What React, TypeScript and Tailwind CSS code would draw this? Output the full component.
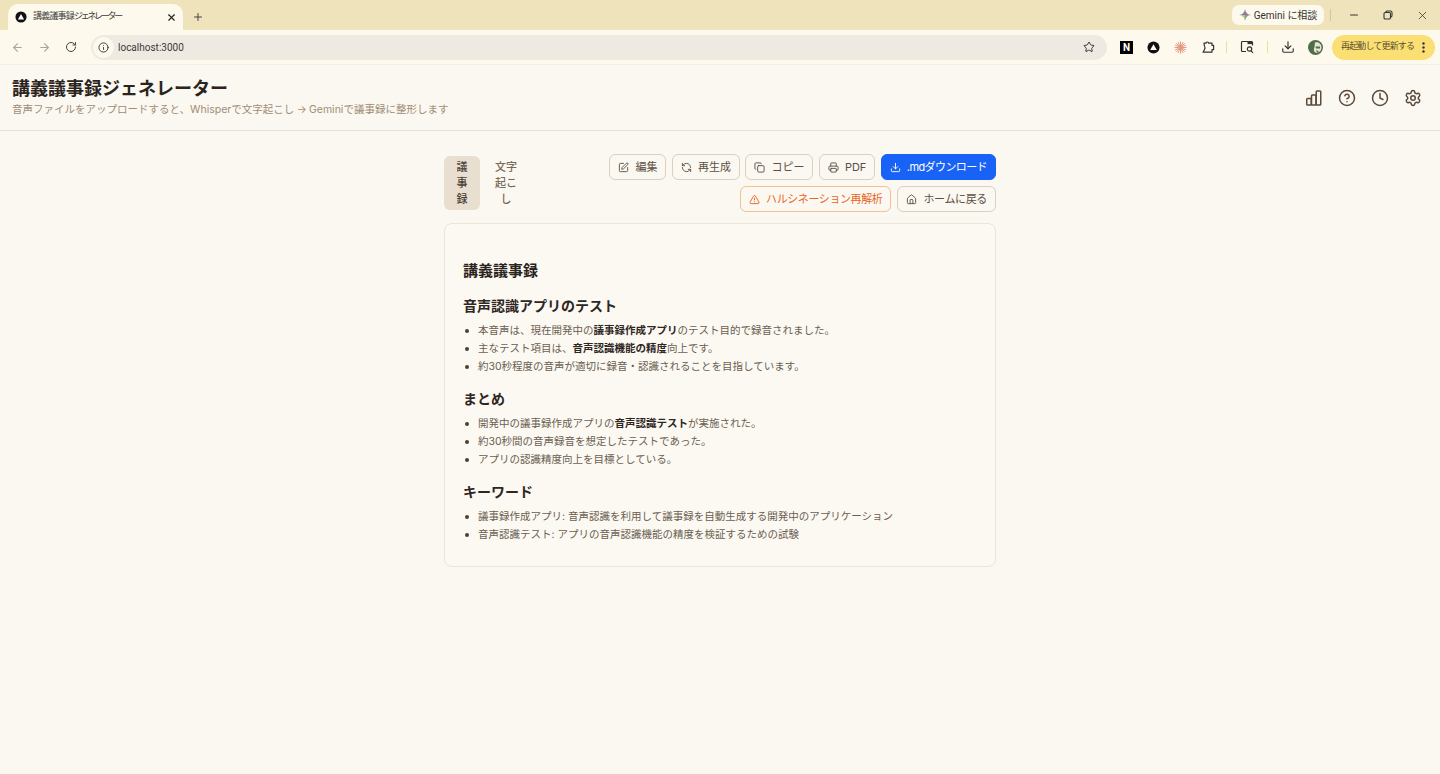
import React from "react";
import { ArrowLeft, ArrowRight, RotateCw, Info, Star, Download, Minus, X, Plus, CircleHelp, Clock, Settings, SquarePen, RefreshCcw, Copy, Printer, TriangleAlert, House } from "lucide-react";

const FONT = { fontFamily: '"Inter","Noto Sans CJK JP",sans-serif' };
const UI = { fontFamily: 'Roboto,"Noto Sans CJK JP",sans-serif' };

function Tri({ size = 14 }: { size?: number }) {
  return (
    <svg width={size} height={size} viewBox="0 0 14 14">
      <circle cx="7" cy="7" r="6.5" fill="#111" />
      <path d="M7 3.4 L10.6 9.8 H3.4 Z" fill="#fff" />
    </svg>
  );
}

function Btn({ icon, children, cls = "border-[#d9d0c1] text-[#5c5045]", text = "" }: { icon: React.ReactNode; children: React.ReactNode; cls?: string; text?: string }) {
  return (
    <button className={`h-[26px] px-[8px] flex items-center gap-[6px] rounded-md border text-[11px] leading-none whitespace-nowrap ${cls}`}>
      {icon}
      <span className={text}>{children}</span>
    </button>
  );
}

function H2({ children, mt }: { children: React.ReactNode; mt: string }) {
  return <h2 className={`text-[14px] leading-[20px] font-semibold text-[#2e261f] ${mt}`}>{children}</h2>;
}

function Li({ children }: { children: React.ReactNode }) {
  return (
    <li className="flex h-[18px] items-center text-[10.5px] text-[#6b5e51]">
      <span className="w-[4px] h-[4px] rounded-full bg-[#4a4036] ml-[2px] mr-[9px]" />
      <span>{children}</span>
    </li>
  );
}

const B = ({ children }: { children: React.ReactNode }) => <strong className="font-bold text-[#2e261f]">{children}</strong>;

export default function App() {
  return (
    <div style={FONT} className="min-h-[774px] bg-[#fbf8f1] flex flex-col overflow-hidden">
      {/* tab strip */}
      <div style={UI} className="h-[30px] bg-[#efe3bb] flex items-end shrink-0">
        <div className="ml-[8px] w-[175px] h-[26px] bg-[#fdf9ec] rounded-t-[10px] flex items-center pl-[7px] pr-[6px] gap-[6px]">
          <Tri size={12} />
          <span className="text-[9px] text-[#3a3a3a] flex-1 whitespace-nowrap">
            <span className="tracking-[-0.8px]">講義議事録</span>
            <span className="tracking-[-2.3px]">ジェネレーター</span>
          </span>
          <X size={11} strokeWidth={2.4} className="text-[#222]" />
        </div>
        <div className="ml-[9px] h-[26px] flex items-center"><Plus size={12} strokeWidth={2} className="text-[#444]" /></div>
        <div className="flex-1" />
        <div className="h-[30px] flex items-center">
          <div className="h-[20px] w-[92px] rounded-[7px] bg-[#fdf9ec] flex items-center justify-center gap-[3px] text-[10px] text-[#333]">
            <svg width="12" height="12" viewBox="0 0 12 12">
              <path d="M6 0 C6.4 3.5 8.5 5.6 12 6 L6 6Z" fill="#e2605a" />
              <path d="M12 6 C8.5 6.4 6.4 8.5 6 12 L6 6Z" fill="#3fb6d0" />
              <path d="M6 12 C5.6 8.5 3.5 6.4 0 6 L6 6Z" fill="#f2b83a" />
              <path d="M0 6 C3.5 5.6 5.6 3.5 6 0 L6 6Z" fill="#4b8bf0" />
            </svg>
            <span>Gemini に相談</span>
          </div>
          <div className="w-px h-[12px] bg-[#d9c88c] ml-[6px]" />
          <div className="w-[109px] flex">
            <div className="w-[12px] ml-[17px] flex justify-center"><Minus size={12} className="text-[#333]" /></div>
            <div className="w-[12px] ml-[22px] flex justify-center">
              <svg width="12" height="12" viewBox="0 0 12 12" fill="none" stroke="#333" strokeWidth="1.1"><rect x="2" y="3.5" width="6.5" height="6.5" rx="1.3" /><path d="M4 3.2 C4 2.2 4.6 2 5.4 2 H8.4 C9.4 2 10 2.6 10 3.6 V6.6 C10 7.4 9.8 8 8.9 8" /></svg>
            </div>
            <div className="w-[13px] ml-[22px] flex justify-center"><X size={13} strokeWidth={1.4} className="text-[#333]" /></div>
          </div>
        </div>
      </div>

      {/* toolbar */}
      <div style={UI} className="h-[35px] bg-[#fdf9ec] flex items-center shrink-0 border-b border-[#f3eee0]">
        <div className="flex items-center ml-[11px] gap-[14px]">
          <ArrowLeft size={13} className="text-[#a9a59a]" />
          <ArrowRight size={13} className="text-[#a9a59a]" />
          <RotateCw size={12} strokeWidth={2} className="text-[#444]" />
        </div>
        <div className="ml-[14px] w-[1016px] h-[25px] rounded-full bg-[#efeae1] flex items-center pl-[2px] pr-[12px]">
          <div className="w-[21px] h-[21px] rounded-full bg-[#fdf9ec] flex items-center justify-center"><Info size={11} className="text-[#333]" /></div>
          <span className="ml-[4px] pt-[1px] text-[10px] text-[#3a3a3a]">localhost:3000</span>
          <div className="flex-1" />
          <Star size={12} className="text-[#333]" />
        </div>
        <div className="ml-[13px] flex items-center">
          <div className="w-[13px] h-[13px] bg-black text-white text-[10px] font-bold leading-[13px] text-center">N</div>
          <div className="ml-[14px]"><Tri size={13} /></div>
          <svg className="ml-[14px]" width="13" height="13" viewBox="0 0 13 13" stroke="#e69a84" strokeWidth="1">
            <path d="M6.5 0.5V12.5M0.5 6.5H12.5M2.3 2.3L10.7 10.7M10.7 2.3L2.3 10.7M4 1L9 12M9 1L4 12M1 4L12 9M12 4L1 9" />
          </svg>
          <svg className="ml-[14px]" width="14" height="14" viewBox="0 0 14 14" fill="none" stroke="#333" strokeWidth="1.2" strokeLinejoin="round">
            <path d="M3 3.2 H5 C5 1.6 7.6 1.6 7.6 3.2 H11 V5.4 H12.6 V9.6 H11 V12.2 H2 L3.4 9.8 C4.4 8.4 4.4 7.4 3.4 6 Z" />
          </svg>
          <div className="w-px h-[12px] bg-[#eedd9f] ml-[11px]" />
          <svg className="ml-[13px]" width="14" height="14" viewBox="0 0 14 14" fill="none" stroke="#333" strokeWidth="1.2"><path d="M6 11.5H2.5a1 1 0 0 1-1-1v-8a1 1 0 0 1 1-1h9a1 1 0 0 1 1 1v3" /><path d="M7.5 3h5" strokeWidth="2.2" /><circle cx="9.5" cy="9" r="2.2" /><path d="M11 10.8L13 12.8" /></svg>
          <div className="w-px h-[12px] bg-[#eedd9f] ml-[13px]" />
          <Download size={14} className="ml-[13px] text-[#333]" />
          <svg className="ml-[13px]" width="15" height="15" viewBox="0 0 15 15">
            <circle cx="7.5" cy="7.5" r="7.5" fill="#4f6f4a" />
            <path d="M7 2.5 C10.5 1.8 13.5 4 13.5 7.5 C13.5 11 10.5 13.5 7.5 12.5 C5.5 11.8 5.5 9 6.5 7 Z" fill="#e6e4d6" />
            <path d="M7.5 6.5 H12 V8.5 H8 Z M8 10 L11 11.5 L9 12.5 Z" fill="#4f6f4a" />
          </svg>
          <div className="ml-[9px] w-[103px] h-[25px] rounded-full bg-[#fbdf74] flex items-center pl-[9px] pr-[10px] text-[9px] tracking-[-0.85px] text-[#5a4f2a] whitespace-nowrap">
            <span className="flex-1">再起動して更新する</span>
            <svg width="3" height="11" viewBox="0 0 3 11" fill="#333"><circle cx="1.5" cy="1.5" r="1.2" /><circle cx="1.5" cy="5.5" r="1.2" /><circle cx="1.5" cy="9.5" r="1.2" /></svg>
          </div>
        </div>
      </div>

      {/* page header */}
      <header className="h-[66px] border-b border-[#e8e2d6] flex items-center justify-between px-[12px] shrink-0">
        <div className="-mt-[1px]">
          <h1 className="text-[18px] leading-[26px] font-bold text-[#2b241d]">講義議事録ジェネレーター</h1>
          <p className="text-[10.5px] leading-[16px] text-[#a08d76]">音声ファイルをアップロードすると、Whisperで文字起こし<span className="tracking-[-0.4px]"> → </span>Geminiで議事録に整形します</p>
        </div>
        <div className="flex items-center gap-[15px] mr-[6px] text-[#5c4a3a]">
          <svg width="18" height="18" viewBox="0 0 18 18" fill="none" stroke="currentColor" strokeWidth="1.5" strokeLinejoin="round">
            <rect x="1.75" y="9.5" width="4.5" height="6.5" rx="0.8" />
            <rect x="6.5" y="6" width="4.5" height="10" rx="0.8" />
            <rect x="11.25" y="2" width="4.5" height="14" rx="0.8" />
          </svg>
          <CircleHelp size={18} strokeWidth={2} />
          <Clock size={18} strokeWidth={2} />
          <Settings size={18} strokeWidth={2} />
        </div>
      </header>

      {/* main */}
      <main className="w-[552px] mx-auto pt-[23px]">
        <div className="flex justify-between items-start">
          <div className="flex gap-[8px] mt-[2px]">
            <div className="w-[36px] h-[54px] rounded-md bg-[#e8dfd0] flex items-center justify-center text-center text-[11px] leading-[16px] font-medium text-[#4a4036] px-[10px]">議事録</div>
            <div className="w-[36px] h-[54px] flex items-center justify-center text-center text-[11px] leading-[16px] font-medium text-[#7a6a58] px-[7px]">文字起こし</div>
          </div>
          <div className="flex flex-col items-end gap-[6px]">
            <div className="flex gap-[5.5px]">
              <Btn icon={<SquarePen size={11} />}>編集</Btn>
              <Btn icon={<RefreshCcw size={11} />}>再生成</Btn>
              <Btn icon={<Copy size={11} />}>コピー</Btn>
              <Btn icon={<Printer size={11} />}>PDF</Btn>
              <Btn icon={<Download size={11} />} cls="border-[#1863f5] bg-[#1863f5] text-white" text="tracking-[-0.6px]">.mdダウンロード</Btn>
            </div>
            <div className="flex gap-[6px]">
              <Btn icon={<TriangleAlert size={11} />} cls="border-[#f5c08e] text-[#e8651c]" text="tracking-[-0.4px]">ハルシネーション再解析</Btn>
              <Btn icon={<House size={11} />} text="tracking-[-0.35px]">ホームに戻る</Btn>
            </div>
          </div>
        </div>

        <article className="mt-[11px] h-[344px] rounded-lg border border-[#ebe5d9] bg-[#fcf9f3] px-[18px] pt-[35px]">
          <h1 className="text-[15px] leading-[24px] font-bold text-[#2b241d]">講義議事録</h1>
          <H2 mt="mt-[13px]">音声認識アプリのテスト</H2>
          <ul className="mt-[6px]">
            <Li>本音声は、現在開発中の<B>議事録作成アプリ</B>のテスト目的で録音されました。</Li>
            <Li>主なテスト項目は、<B>音声認識機能の精度</B>向上です。</Li>
            <Li>約30秒程度の音声が適切に録音・認識されることを目指しています。</Li>
          </ul>
          <H2 mt="mt-[13px]">まとめ</H2>
          <ul className="mt-[6px]">
            <Li>開発中の議事録作成アプリの<B>音声認識テスト</B>が実施された。</Li>
            <Li>約30秒間の音声録音を想定したテストであった。</Li>
            <Li>アプリの認識精度向上を目標としている。</Li>
          </ul>
          <H2 mt="mt-[13px]">キーワード</H2>
          <ul className="mt-[6px]">
            <Li>議事録作成アプリ: 音声認識を利用して議事録を自動生成する開発中のアプリケーション</Li>
            <Li>音声認識テスト: アプリの音声認識機能の精度を検証するための試験</Li>
          </ul>
        </article>
      </main>
    </div>
  );
}
